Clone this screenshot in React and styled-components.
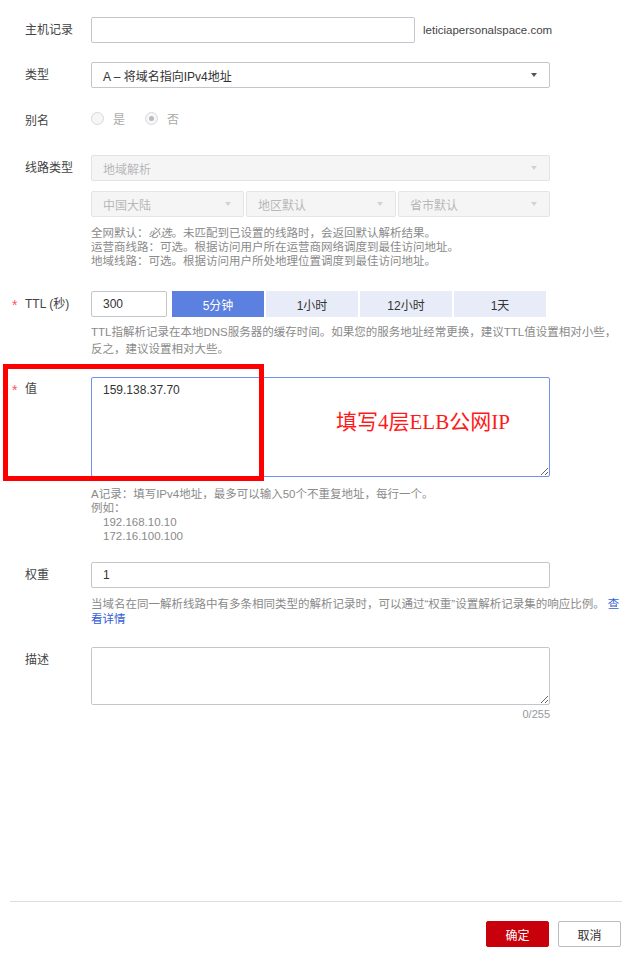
import React from "react";
import styled, { createGlobalStyle } from "styled-components";

const Global = createGlobalStyle`
  html, body { margin: 0; padding: 0; background: #fff; }
  body { font-family: "Liberation Sans", "Noto Sans CJK SC", sans-serif; }
  * { box-sizing: border-box; }
`;

const Page = styled.div`
  position: relative;
  width: 635px;
  min-height: 955px;
  display: flex;
  flex-direction: column;
  background: #fff;
  color: #333;
  font-size: 12px;
`;

const Form = styled.div`
  display: flex;
  flex-direction: column;
  padding-top: 17px;
`;

const Row = styled.div`
  display: flex;
  align-items: flex-start;
  margin-top: ${(p) => p.$mt || 0}px;
`;

const Label = styled.div`
  position: relative;
  top: ${(p) => p.$shift || 0}px;
  width: 91px;
  flex: none;
  padding-left: 25px;
  font-size: 12px;
  line-height: ${(p) => p.$lh || 26}px;
  color: #444;
  white-space: nowrap;
`;

const Star = styled.span`
  position: absolute;
  left: 12px;
  top: 1px;
  color: #f35a5a;
  font-size: 14px;
`;

const Field = styled.div`
  width: 531px;
  display: flex;
  flex-direction: column;
`;

const Line = styled.div`
  display: flex;
  align-items: center;
  gap: ${(p) => p.$gap || 0}px;
  margin-top: ${(p) => p.$mt || 0}px;
  height: ${(p) => (p.$h ? `${p.$h}px` : "auto")};
`;

const Input = styled.div`
  width: ${(p) => p.$w || 459}px;
  height: 26px;
  border: 1px solid #c3c6cc;
  border-radius: 2px;
  background: #fff;
  padding: 0 11px;
  display: flex;
  align-items: center;
  font-size: 12px;
  color: #333;
`;

const Suffix = styled.span`
  margin-left: 8px;
  font-size: 11.5px;
  color: #444;
`;

const Select = styled.div`
  width: ${(p) => p.$w || 459}px;
  height: 26px;
  border: 1px solid ${(p) => (p.$disabled ? "#e3e4e6" : "#c3c6cc")};
  border-radius: 2px;
  background: ${(p) => (p.$disabled ? "#f5f5f6" : "#fff")};
  color: ${(p) => (p.$disabled ? "#b8b8b8" : "#333")};
  padding: 0 12px 0 11px;
  display: flex;
  align-items: center;
  justify-content: space-between;
  font-size: 12px;
`;

const Caret = styled.span`
  width: 0;
  height: 0;
  border-left: 3.5px solid transparent;
  border-right: 3.5px solid transparent;
  border-top: 4px solid ${(p) => (p.$light ? "#d0d2d6" : "#555")};
`;

const Radio = styled.span`
  display: inline-flex;
  align-items: center;
  gap: 9px;
  color: #aaa;
  font-size: 12px;
  margin-right: 20px;
`;

const Circle = styled.span`
  width: 13px;
  height: 13px;
  border-radius: 50%;
  border: 1px solid #d7d8db;
  background: #f6f6f7;
  display: inline-flex;
  align-items: center;
  justify-content: center;
  &::after {
    content: "";
    width: 5px;
    height: 5px;
    border-radius: 50%;
    background: ${(p) => (p.$checked ? "#b9bbbf" : "transparent")};
  }
`;

const Help = styled.div`
  margin-top: ${(p) => p.$mt || 8}px;
  font-size: 11.5px;
  line-height: ${(p) => p.$lh || 15}px;
  color: #8a8a8a;
  white-space: nowrap;
`;

const Indent = styled.div`
  padding-left: 12px;
`;

const Link = styled.span`
  color: #3660d6;
`;

const TtlButton = styled.div`
  width: 92px;
  height: 26px;
  display: flex;
  align-items: center;
  justify-content: center;
  font-size: 12px;
  background: ${(p) => (p.$active ? "#5b80e0" : "#e8ecf8")};
  color: ${(p) => (p.$active ? "#fff" : "#333")};
`;

const TtlGroup = styled.div`
  display: flex;
  gap: 2px;
  margin-left: 5px;
`;

const AreaWrap = styled.div`
  position: relative;
  width: 459px;
`;

const TextArea = styled.textarea`
  display: block;
  width: 459px;
  height: ${(p) => p.$h}px;
  margin: 0;
  border: 1px solid ${(p) => (p.$focus ? "#7290ee" : "#c3c6cc")};
  border-radius: 2px;
  padding: 5px 11px;
  font-family: "Liberation Sans", "Noto Sans CJK SC", sans-serif;
  font-size: 12px;
  color: #333;
  outline: none;
  resize: both;
  background: #fff;
`;

const Note = styled.div`
  position: absolute;
  left: 245px;
  top: 28px;
  font-family: "Liberation Serif", "Noto Sans CJK SC", serif;
  font-size: 21px;
  color: #ff1a1a;
  white-space: nowrap;
  pointer-events: none;
`;

const Counter = styled.div`
  width: 459px;
  text-align: right;
  margin-top: 3px;
  font-size: 11px;
  color: #999;
`;

const RedBox = styled.div`
  position: absolute;
  left: 3px;
  top: 364px;
  width: 261px;
  height: 117px;
  border: 5px solid #ff0000;
  pointer-events: none;
`;

const Spacer = styled.div`
  flex: 1;
`;

const Divider = styled.div`
  height: 1px;
  margin: 0 13px 0 10px;
  background: #dcdde0;
`;

const Footer = styled.div`
  display: flex;
  justify-content: flex-end;
  gap: 9px;
  padding: 19px 14px 8px 0;
`;

const Button = styled.div`
  width: 63px;
  height: 26px;
  display: flex;
  align-items: center;
  justify-content: center;
  font-size: 12px;
  border-radius: 2px;
  background: ${(p) => (p.$primary ? "#c7000b" : "#fff")};
  color: ${(p) => (p.$primary ? "#fff" : "#333")};
  border: 1px solid ${(p) => (p.$primary ? "#c7000b" : "#b9bcc2")};
`;

export default function App() {
  return (
    <Page>
      <Global />
      <Form>
        <Row>
          <Label>主机记录</Label>
          <Field>
            <Line>
              <Input $w={324} />
              <Suffix>leticiapersonalspace.com</Suffix>
            </Line>
          </Field>
        </Row>

        <Row $mt={19}>
          <Label>类型</Label>
          <Field>
            <Select>
              <span>A – 将域名指向IPv4地址</span>
              <Caret />
            </Select>
          </Field>
        </Row>

        <Row $mt={21}>
          <Label $lh={18} $shift={3}>别名</Label>
          <Field>
            <Line $h={18}>
              <Radio>
                <Circle />
                是
              </Radio>
              <Radio>
                <Circle $checked />
                否
              </Radio>
            </Line>
          </Field>
        </Row>

        <Row $mt={28}>
          <Label>线路类型</Label>
          <Field>
            <Select $disabled>
              <span>地域解析</span>
              <Caret $light />
            </Select>
            <Line $gap={2} $mt={10}>
              <Select $disabled $w={153}>
                <span>中国大陆</span>
                <Caret $light />
              </Select>
              <Select $disabled $w={150}>
                <span>地区默认</span>
                <Caret $light />
              </Select>
              <Select $disabled $w={152}>
                <span>省市默认</span>
                <Caret $light />
              </Select>
            </Line>
            <Help $mt={9} $lh={14}>
              <div>全网默认：<i>必选</i>。未匹配到已设置的线路时，会返回默认解析结果。</div>
              <div>运营商线路：可选。根据访问用户所在运营商网络调度到最佳访问地址。</div>
              <div>地域线路：可选。根据访问用户所处地理位置调度到最佳访问地址。</div>
            </Help>
          </Field>
        </Row>

        <Row $mt={23}>
          <Label>
            <Star>*</Star>TTL (秒)
          </Label>
          <Field>
            <Line>
              <Input $w={76}>300</Input>
              <TtlGroup>
                <TtlButton $active>5分钟</TtlButton>
                <TtlButton>1小时</TtlButton>
                <TtlButton>12小时</TtlButton>
                <TtlButton>1天</TtlButton>
              </TtlGroup>
            </Line>
            <Help $mt={7} $lh={17}>
              <div>TTL指解析记录在本地DNS服务器的缓存时间。如果您的服务地址经常更换，建议TTL值设置相对小些，</div>
              <div>反之，建议设置相对大些。</div>
            </Help>
          </Field>
        </Row>

        <Row $mt={19}>
          <Label $lh={24}>
            <Star>*</Star>值
          </Label>
          <Field>
            <AreaWrap>
              <TextArea $h={100} $focus readOnly defaultValue="159.138.37.70" />
              <Note>填写4层ELB公网IP</Note>
            </AreaWrap>
            <Help $mt={10} $lh={14}>
              <div>A记录：填写IPv4地址，最多可以输入50个不重复地址，每行一个。</div>
              <div>例如：</div>
              <Indent>192.168.10.10</Indent>
              <Indent>172.16.100.100</Indent>
            </Help>
          </Field>
        </Row>

        <Row $mt={19}>
          <Label>权重</Label>
          <Field>
            <Input>1</Input>
            <Help $mt={9} $lh={15}>
              <div>
                当域名在同一解析线路中有多条相同类型的解析记录时，可以通过“权重”设置解析记录集的响应比例。 <Link>查</Link>
              </div>
              <div>
                <Link>看详情</Link>
              </div>
            </Help>
          </Field>
        </Row>

        <Row $mt={20}>
          <Label $lh={26}>描述</Label>
          <Field>
            <TextArea $h={58} readOnly defaultValue="" />
            <Counter>0/255</Counter>
          </Field>
        </Row>
      </Form>

      <Spacer />
      <Divider />
      <Footer>
        <Button $primary>确定</Button>
        <Button>取消</Button>
      </Footer>

      <RedBox />
    </Page>
  );
}
